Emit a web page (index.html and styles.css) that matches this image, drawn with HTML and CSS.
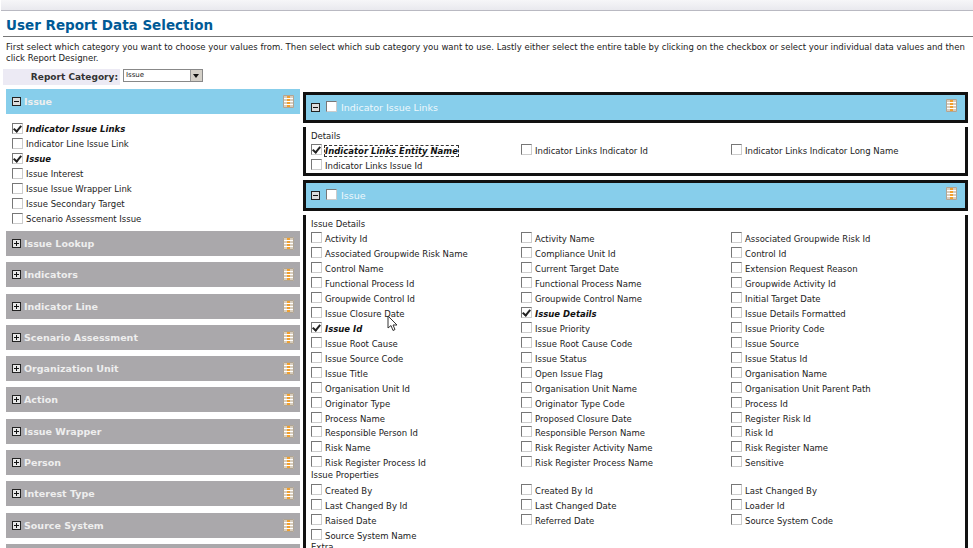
FILE: index.html
```html
<!DOCTYPE html>
<html lang="en">

<head>
    <meta charset="utf-8">
    <title>User Report Data Selection</title>
    <link rel="stylesheet" href="styles.css">
</head>

<body>
    <svg class="defs" width="0" height="0">
        <symbol id="tbl" viewBox="0 0 11 13">
            <rect width="11" height="13" fill="#d8cdbd"/>
            <rect x="4" width="3" height="13" fill="#f0a030"/>
            <path d="M0 3.5H11M0 6.5H11M0 9.5H11" stroke="#fff" stroke-width="1"/>
            <path d="M.5.5H10.5V12.5H.5Z" fill="none" stroke="#b0a595"/>
        </symbol>
        <symbol id="plus" viewBox="0 0 9 9">
            <rect x=".5" y=".5" width="8" height="8" fill="#e8e8e8" stroke="#222"/>
            <path d="M2 4.5H7M4.5 2V7" stroke="#111"/>
        </symbol>
        <symbol id="minus" viewBox="0 0 9 9">
            <rect x=".5" y=".5" width="8" height="8" fill="#ddd" stroke="#222"/>
            <path d="M2 4.5H7" stroke="#111"/>
        </symbol>
    </svg>

    <div class="topbar"></div>
    <h1>User Report Data Selection</h1>
    <p class="intro">First select which category you want to choose your values from. Then select which sub category you want to use. Lastly either select the entire table by clicking on the checkbox or select your individual data values and then click Report Designer.</p>

    <div class="category">
        <label>Report Category:</label>
        <div class="select"><span>Issue</span><b></b></div>
    </div>

    <div class="panes">
        <div class="left">
            <div class="head blue"><svg class="exp"><use href="#minus"/></svg><span>Issue</span><svg class="tbl"><use href="#tbl"/></svg></div>
            <ul class="sublist">
                <li class="on"><i class="cb"></i>Indicator Issue Links</li>
                <li><i class="cb"></i>Indicator Line Issue Link</li>
                <li class="on"><i class="cb"></i>Issue</li>
                <li><i class="cb"></i>Issue Interest</li>
                <li><i class="cb"></i>Issue Issue Wrapper Link</li>
                <li><i class="cb"></i>Issue Secondary Target</li>
                <li><i class="cb"></i>Scenario Assessment Issue</li>
            </ul>
            <div class="head"><svg class="exp"><use href="#plus"/></svg><span>Issue Lookup</span><svg class="tbl"><use href="#tbl"/></svg></div>
            <div class="head"><svg class="exp"><use href="#plus"/></svg><span>Indicators</span><svg class="tbl"><use href="#tbl"/></svg></div>
            <div class="head"><svg class="exp"><use href="#plus"/></svg><span>Indicator Line</span><svg class="tbl"><use href="#tbl"/></svg></div>
            <div class="head"><svg class="exp"><use href="#plus"/></svg><span>Scenario Assessment</span><svg class="tbl"><use href="#tbl"/></svg></div>
            <div class="head"><svg class="exp"><use href="#plus"/></svg><span>Organization Unit</span><svg class="tbl"><use href="#tbl"/></svg></div>
            <div class="head"><svg class="exp"><use href="#plus"/></svg><span>Action</span><svg class="tbl"><use href="#tbl"/></svg></div>
            <div class="head"><svg class="exp"><use href="#plus"/></svg><span>Issue Wrapper</span><svg class="tbl"><use href="#tbl"/></svg></div>
            <div class="head"><svg class="exp"><use href="#plus"/></svg><span>Person</span><svg class="tbl"><use href="#tbl"/></svg></div>
            <div class="head"><svg class="exp"><use href="#plus"/></svg><span>Interest Type</span><svg class="tbl"><use href="#tbl"/></svg></div>
            <div class="head"><svg class="exp"><use href="#plus"/></svg><span>Source System</span><svg class="tbl"><use href="#tbl"/></svg></div>
            <div class="head"></div>
        </div>

        <div class="right">
            <div class="bar first"><svg class="exp"><use href="#minus"/></svg><i class="cb"></i><span>Indicator Issue Links</span><svg class="tbl"><use href="#tbl"/></svg></div>
            <div class="box small">
                <h4>Details</h4>
                <div class="fields">
                    <div class="on focus"><i class="cb"></i><span>Indicator Links Entity Name</span></div>
                    <div><i class="cb"></i><span>Indicator Links Indicator Id</span></div>
                    <div><i class="cb"></i><span>Indicator Links Indicator Long Name</span></div>
                    <div><i class="cb"></i><span>Indicator Links Issue Id</span></div>
                </div>
            </div>
            <div class="bar"><svg class="exp"><use href="#minus"/></svg><i class="cb"></i><span>Issue</span><svg class="tbl"><use href="#tbl"/></svg></div>
            <div class="box">
                <h4>Issue Details</h4>
                <div class="fields">
                    <div><i class="cb"></i><span>Activity Id</span></div>
                    <div><i class="cb"></i><span>Activity Name</span></div>
                    <div><i class="cb"></i><span>Associated Groupwide Risk Id</span></div>
                    <div><i class="cb"></i><span>Associated Groupwide Risk Name</span></div>
                    <div><i class="cb"></i><span>Compliance Unit Id</span></div>
                    <div><i class="cb"></i><span>Control Id</span></div>
                    <div><i class="cb"></i><span>Control Name</span></div>
                    <div><i class="cb"></i><span>Current Target Date</span></div>
                    <div><i class="cb"></i><span>Extension Request Reason</span></div>
                    <div><i class="cb"></i><span>Functional Process Id</span></div>
                    <div><i class="cb"></i><span>Functional Process Name</span></div>
                    <div><i class="cb"></i><span>Groupwide Activity Id</span></div>
                    <div><i class="cb"></i><span>Groupwide Control Id</span></div>
                    <div><i class="cb"></i><span>Groupwide Control Name</span></div>
                    <div><i class="cb"></i><span>Initial Target Date</span></div>
                    <div><i class="cb"></i><span>Issue Closure Date</span></div>
                    <div class="on"><i class="cb"></i><span>Issue Details</span></div>
                    <div><i class="cb"></i><span>Issue Details Formatted</span></div>
                    <div class="on"><i class="cb"></i><span>Issue Id</span></div>
                    <div><i class="cb"></i><span>Issue Priority</span></div>
                    <div><i class="cb"></i><span>Issue Priority Code</span></div>
                    <div><i class="cb"></i><span>Issue Root Cause</span></div>
                    <div><i class="cb"></i><span>Issue Root Cause Code</span></div>
                    <div><i class="cb"></i><span>Issue Source</span></div>
                    <div><i class="cb"></i><span>Issue Source Code</span></div>
                    <div><i class="cb"></i><span>Issue Status</span></div>
                    <div><i class="cb"></i><span>Issue Status Id</span></div>
                    <div><i class="cb"></i><span>Issue Title</span></div>
                    <div><i class="cb"></i><span>Open Issue Flag</span></div>
                    <div><i class="cb"></i><span>Organisation Name</span></div>
                    <div><i class="cb"></i><span>Organisation Unit Id</span></div>
                    <div><i class="cb"></i><span>Organisation Unit Name</span></div>
                    <div><i class="cb"></i><span>Organisation Unit Parent Path</span></div>
                    <div><i class="cb"></i><span>Originator Type</span></div>
                    <div><i class="cb"></i><span>Originator Type Code</span></div>
                    <div><i class="cb"></i><span>Process Id</span></div>
                    <div><i class="cb"></i><span>Process Name</span></div>
                    <div><i class="cb"></i><span>Proposed Closure Date</span></div>
                    <div><i class="cb"></i><span>Register Risk Id</span></div>
                    <div><i class="cb"></i><span>Responsible Person Id</span></div>
                    <div><i class="cb"></i><span>Responsible Person Name</span></div>
                    <div><i class="cb"></i><span>Risk Id</span></div>
                    <div><i class="cb"></i><span>Risk Name</span></div>
                    <div><i class="cb"></i><span>Risk Register Activity Name</span></div>
                    <div><i class="cb"></i><span>Risk Register Name</span></div>
                    <div><i class="cb"></i><span>Risk Register Process Id</span></div>
                    <div><i class="cb"></i><span>Risk Register Process Name</span></div>
                    <div><i class="cb"></i><span>Sensitive</span></div>
                </div>
                <h4 class="sub">Issue Properties</h4>
                <div class="fields">
                    <div><i class="cb"></i><span>Created By</span></div>
                    <div><i class="cb"></i><span>Created By Id</span></div>
                    <div><i class="cb"></i><span>Last Changed By</span></div>
                    <div><i class="cb"></i><span>Last Changed By Id</span></div>
                    <div><i class="cb"></i><span>Last Changed Date</span></div>
                    <div><i class="cb"></i><span>Loader Id</span></div>
                    <div><i class="cb"></i><span>Raised Date</span></div>
                    <div><i class="cb"></i><span>Referred Date</span></div>
                    <div><i class="cb"></i><span>Source System Code</span></div>
                    <div><i class="cb"></i><span>Source System Name</span></div>
                </div>
                <h4 class="sub">Extra</h4>
            </div>
        </div>
    </div>

    <svg class="pointer" width="11" height="17" viewBox="0 0 11 17">
        <path d="M1 1V13L4 10.500L6 15.500L8 14.500L6 10H10Z" fill="#fff" stroke="#333"/>
    </svg>
</body>

</html>
```
FILE: styles.css
```css
html {
    height: 548px;
    overflow: hidden;
}

body {
    margin: 0;
    height: 548px;
    overflow: hidden;
    position: relative;
    background-color: #fff;
    color: #222;
    font-family: "DejaVu Sans", Verdana, sans-serif;
    font-size: 8.5px;
}

.defs {
    display: block;
    height: 0;
}

.topbar {
    height: 10px;
    background: linear-gradient(#f6f6f8, #e9e9ee);
    border-bottom: 1px solid #b9b9c2;
    margin-left: 1px;
}

h1 {
    margin: 7px 0 0 6px;
    padding-bottom: 4px;
    height: 14px;
    line-height: 14px;
    font-size: 13.5px;
    color: #005a96;
    border-bottom: 1px solid #777;
    margin-right: 0;
    margin-left: 3px;
    padding-left: 3px;
}

.intro {
    margin: 5px 4px 0 6px;
    line-height: 11px;
}

.category {
    display: flex;
    margin: 5px 0 0 3px;
    align-items: flex-start;
}

.category label {
    width: 117px;
    height: 16px;
    line-height: 16px;
    box-sizing: border-box;
    padding-right: 2px;
    text-align: right;
    font-weight: bold;
    color: #333;
    font-size: 9px;
    background-color: #eceaf4;
}

.select {
    margin-left: 3px;
    width: 80px;
    height: 13px;
    box-sizing: border-box;
    border: 1px solid #888;
    display: flex;
    justify-content: space-between;
    font-size: 7px;
    line-height: 11px;
    padding-left: 2px;
}

.select b {
    width: 11px;
    background-color: #d4d0c8;
    border-left: 1px solid #999;
    position: relative;
}

.select b::after {
    content: "";
    position: absolute;
    left: 2px;
    top: 4px;
    border: 3px solid transparent;
    border-top: 4px solid #111;
}

.panes {
    display: flex;
    margin: 4px 0 0 6px;
    gap: 3px;
    align-items: flex-start;
}

.left {
    width: 294px;
    flex-shrink: 0;
}

.right {
    width: 665px;
    flex-shrink: 0;
}

.head {
    display: flex;
    align-items: center;
    height: 25px;
    margin-bottom: 6.300px;
    padding: 0 6px;
    box-sizing: border-box;
    background-color: #aaa8ab;
    color: #eee;
    font-weight: bold;
    font-size: 9.500px;
}

.head.blue {
    background-color: #87ceeb;
    margin-bottom: 0;
}

.head span {
    flex: 1;
    margin-left: 3px;
}

.exp {
    width: 9px;
    height: 9px;
    flex-shrink: 0;
}

.tbl {
    width: 11px;
    height: 13px;
    flex-shrink: 0;
}

.sublist {
    list-style: none;
    margin: 0;
    padding: 8px 0 0 6px;
    height: 109px;
}

.sublist li {
    height: 15px;
    line-height: 15px;
    display: flex;
    align-items: center;
    white-space: nowrap;
}

.cb {
    display: block;
    position: relative;
    width: 9px;
    height: 9px;
    margin-right: 3px;
    margin-top: -3px;
    flex-shrink: 0;
    border: 1px solid #777;
    border-right-color: #ccc;
    border-bottom-color: #ccc;
    background-color: #fff;
}

.on .cb::after {
    content: "";
    position: absolute;
    left: 2px;
    top: 0;
    width: 3px;
    height: 6px;
    border-right: 2px solid #222;
    border-bottom: 2px solid #222;
    transform: rotate(40deg);
}

.on {
    font-weight: bold;
    font-style: italic;
    color: #111;
}

.bar {
    display: flex;
    align-items: center;
    height: 31px;
    box-sizing: border-box;
    margin-top: 4px;
    padding: 0 8px 0 5px;
    border: 3px solid #111;
    background-color: #87ceeb;
    color: #eef8fc;
    font-size: 9.500px;
}

.bar.first {
    margin-top: 3px;
}

.bar span {
    flex: 1;
    margin-left: 1px;
}

.bar .exp {
    margin-right: 6px;
}

.bar .cb {
    margin: -2px 3px 0 0;
}

.bar .tbl {
    margin-top: -4px;
}

.box {
    margin-top: 4px;
    box-sizing: border-box;
    padding: 5px 0 0 5px;
    border: 3px solid #111;
    border-top: 0;
    border-bottom: 0;
    height: 400px;
}

.box.small {
    height: 49px;
    border-bottom: 3px solid #111;
}

.box h4 {
    margin: 0;
    font-weight: normal;
    font-size: 8.5px;
    line-height: 9px;
}

.box h4.sub {
    margin-top: -1px;
    line-height: 11px;
}

.fields {
    display: grid;
    grid-template-columns: 210px 210px 1fr;
    grid-auto-rows: 14.930px;
    margin-top: 3px;
}

.fields div {
    display: flex;
    align-items: center;
    padding-left: 0;
    white-space: nowrap;
}

.focus span {
    outline: 1px dashed #333;
}

.pointer {
    position: absolute;
    left: 387px;
    top: 315px;
}
```
